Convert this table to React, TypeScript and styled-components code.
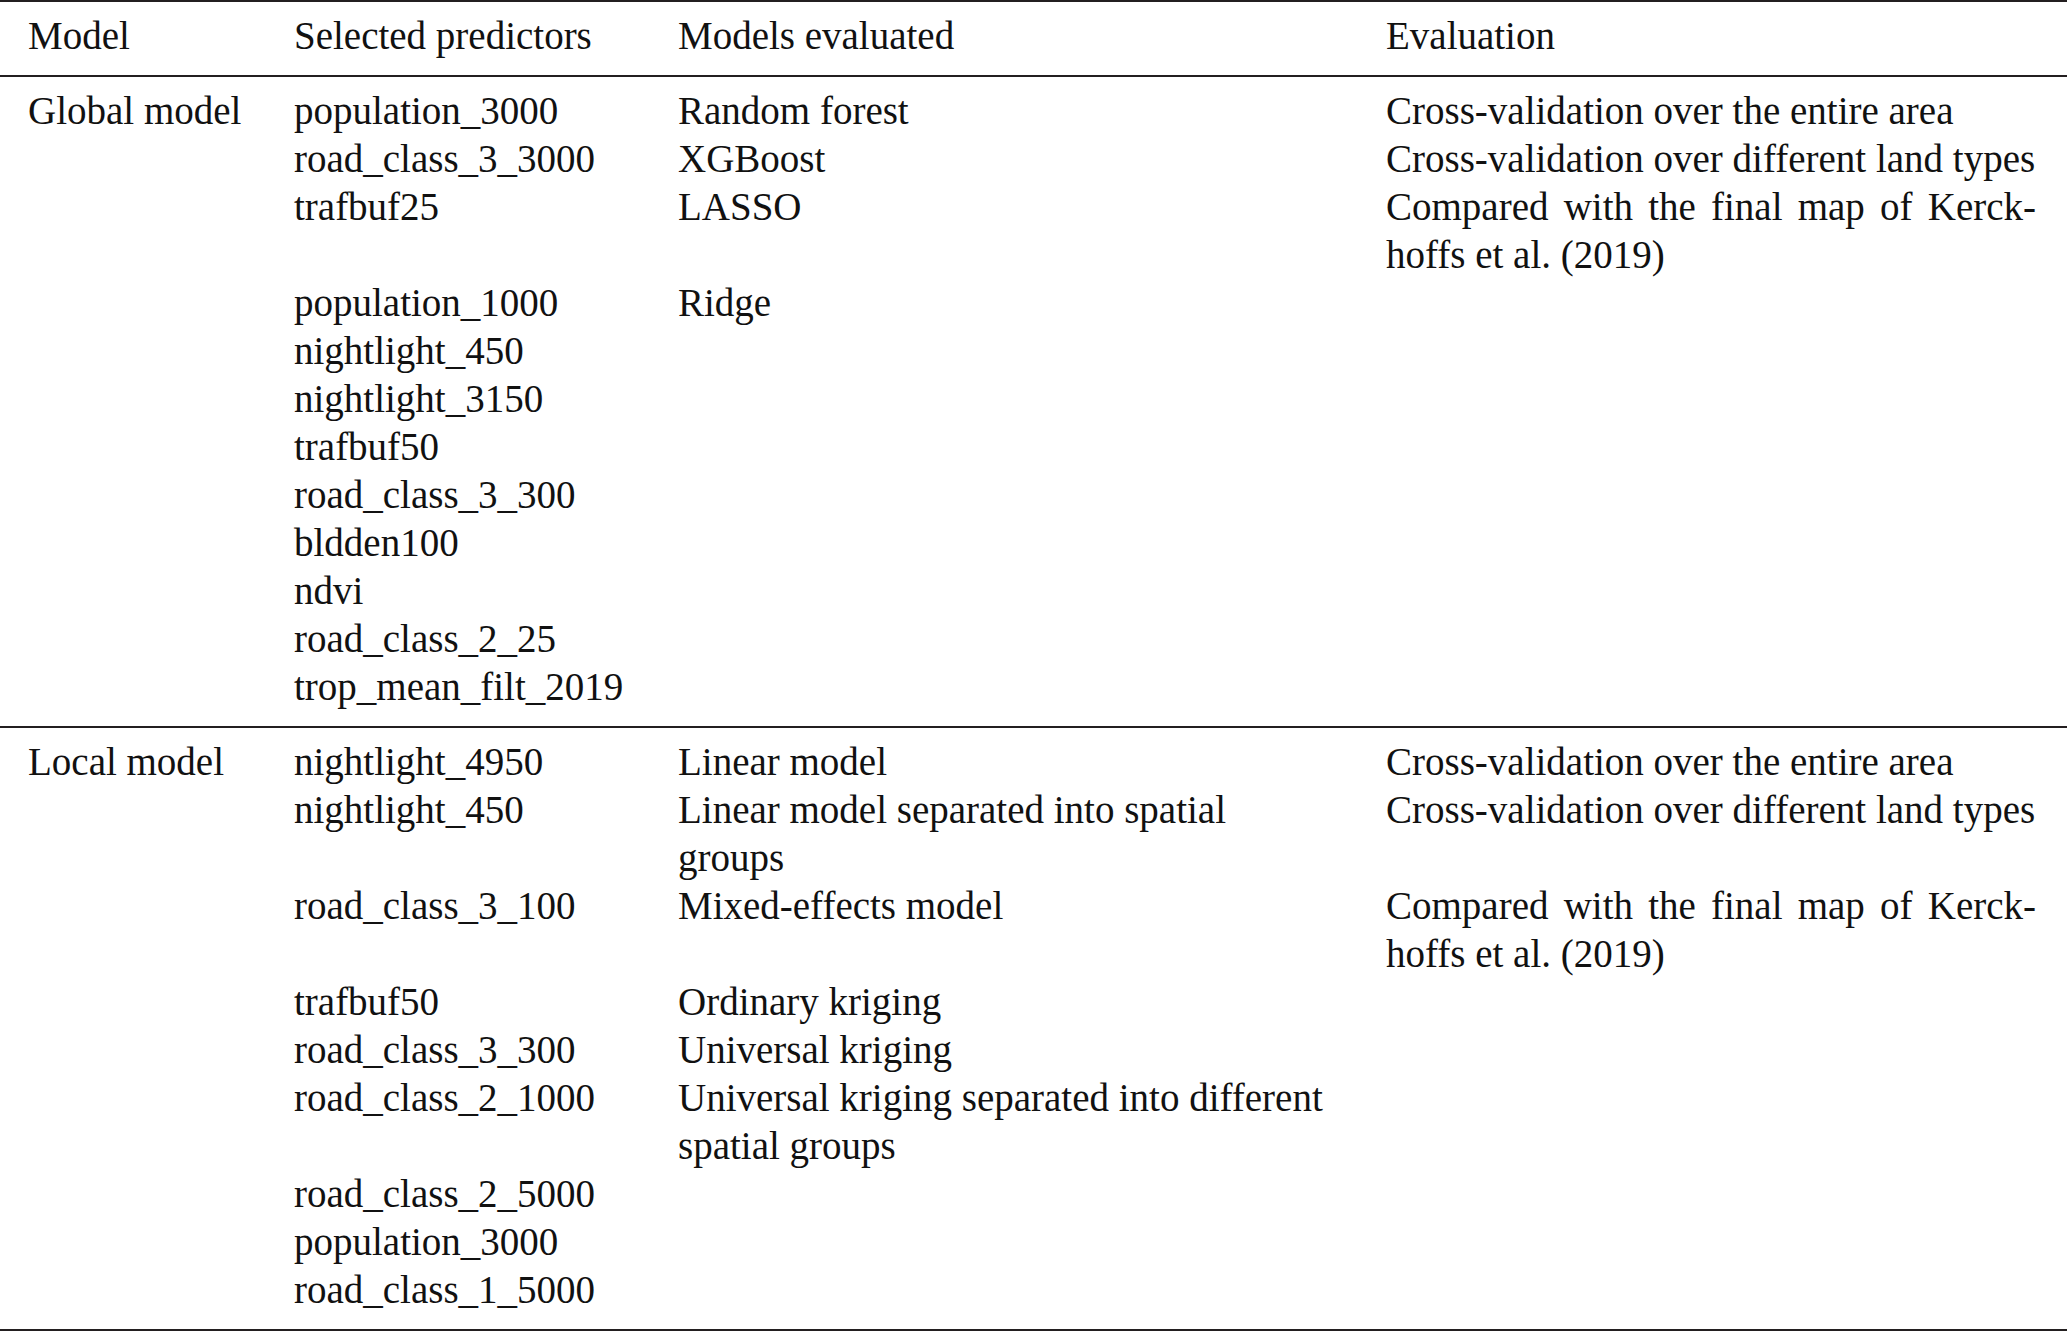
import styled, { createGlobalStyle } from "styled-components";

interface Row {
  predictor: string;
  model?: string;
  evaluation?: string;
}

interface Group {
  label: string;
  rows: Row[];
}

const compared = "Compared with the final map of Kerck\u00adhoffs et al. (2019)";

const groups: Group[] = [
  {
    label: "Global model",
    rows: [
      { predictor: "population_3000", model: "Random forest", evaluation: "Cross-validation over the entire area" },
      { predictor: "road_class_3_3000", model: "XGBoost", evaluation: "Cross-validation over different land types" },
      { predictor: "trafbuf25", model: "LASSO", evaluation: compared },
      { predictor: "population_1000", model: "Ridge" },
      { predictor: "nightlight_450" },
      { predictor: "nightlight_3150" },
      { predictor: "trafbuf50" },
      { predictor: "road_class_3_300" },
      { predictor: "bldden100" },
      { predictor: "ndvi" },
      { predictor: "road_class_2_25" },
      { predictor: "trop_mean_filt_2019" },
    ],
  },
  {
    label: "Local model",
    rows: [
      { predictor: "nightlight_4950", model: "Linear model", evaluation: "Cross-validation over the entire area" },
      { predictor: "nightlight_450", model: "Linear model separated into spatial groups", evaluation: "Cross-validation over different land types" },
      { predictor: "road_class_3_100", model: "Mixed-effects model", evaluation: compared },
      { predictor: "trafbuf50", model: "Ordinary kriging" },
      { predictor: "road_class_3_300", model: "Universal kriging" },
      { predictor: "road_class_2_1000", model: "Universal kriging separated into different spatial groups" },
      { predictor: "road_class_2_5000" },
      { predictor: "population_3000" },
      { predictor: "road_class_1_5000" },
    ],
  },
];

export default function App() {
  return (
    <>
      <GlobalStyle />
      <Table>
        <colgroup>
          <col style={{ width: 266 }} />
          <col style={{ width: 384 }} />
          <col style={{ width: 708 }} />
          <col />
        </colgroup>
        <Head>
          <tr>
            <Th>Model</Th>
            <Th>Selected predictors</Th>
            <Th>Models evaluated</Th>
            <Th $last>Evaluation</Th>
          </tr>
        </Head>
        {groups.map((g) => (
          <Body key={g.label}>
            {g.rows.map((r, idx) => (
              <tr key={g.label + idx}>
                <Td $nowrap>{idx === 0 ? g.label : ""}</Td>
                <Td $nowrap>{r.predictor}</Td>
                <Td>{r.model ?? ""}</Td>
                <Td $last>{r.evaluation ?? ""}</Td>
              </tr>
            ))}
          </Body>
        ))}
      </Table>
    </>
  );
}

const GlobalStyle = createGlobalStyle`
  html, body {
    margin: 0;
    padding: 0;
    background: #fff;
  }
`;

const Table = styled.table`
  width: 100%;
  table-layout: fixed;
  border-collapse: collapse;
  border-top: 2px solid #231f20;
  font-family: "Liberation Serif", "Times New Roman", serif;
  font-size: 39px;
  line-height: 48px;
  color: #111;
`;

const Head = styled.thead`
  border-bottom: 2px solid #231f20;

  th {
    padding-top: 10px;
    padding-bottom: 15px;
  }
`;

const Body = styled.tbody`
  border-bottom: 2px solid #231f20;

  tr:first-child td {
    padding-top: 10px;
  }
  tr:last-child td {
    padding-bottom: 15px;
  }
`;

const Th = styled.th<{ $last?: boolean }>`
  text-align: left;
  font-weight: normal;
  vertical-align: top;
  padding-left: 28px;
  padding-right: ${(p) => (p.$last ? "31px" : "25px")};
  white-space: nowrap;
`;

const Td = styled.td<{ $last?: boolean; $nowrap?: boolean }>`
  vertical-align: top;
  padding: 0 ${(p) => (p.$last ? "31px" : "25px")} 0 28px;
  text-align: ${(p) => (p.$last ? "justify" : "left")};
  white-space: ${(p) => (p.$nowrap ? "nowrap" : "normal")};
  hyphens: manual;
`;
